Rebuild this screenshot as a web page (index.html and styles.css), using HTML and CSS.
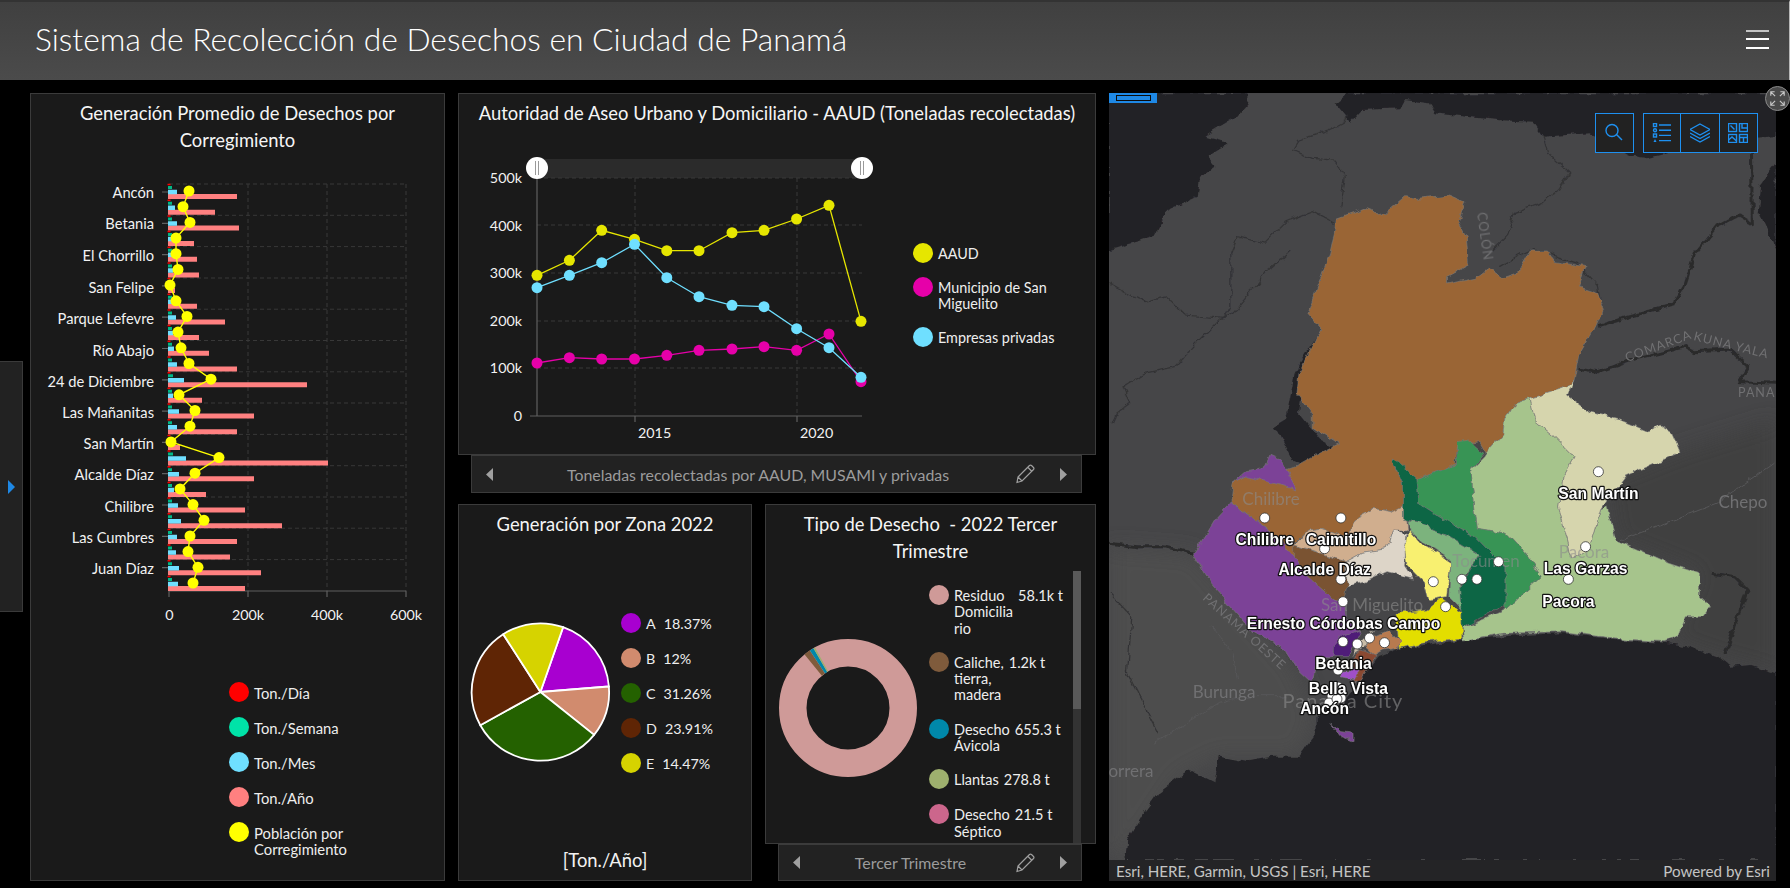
FILE: index.html
```html
<!DOCTYPE html>
<html lang="es">
<head>
<meta charset="utf-8">
<title>Sistema de Recolección de Desechos en Ciudad de Panamá</title>
<link rel="stylesheet" href="styles.css">
</head>
<body>
<header class="topbar">
  <h1 class="app-title">Sistema de Recolección de Desechos en Ciudad de Panamá</h1>
  <div class="burger"><span></span><span></span><span></span></div>
</header>
<div class="side-tab"><span class="side-arrow"></span></div>
<main class="dash">
  <section class="panel col-a">
    <h2 class="title">Generación Promedio de Desechos por Corregimiento</h2>
    <svg class="chart-a" viewBox="31 154 413 486">
      <g class="grid">
        <path d="M169 184H406M169 215.3H406M169 246.6H406M169 278H406M169 309.2H406M169 340.5H406M169 371.8H406M169 403H406M169 434.4H406M169 465.7H406M169 497H406M169 528.2H406M169 559.6H406M248 184V591M327 184V591M406 184V591"/>
      </g>
      <path class="axis" d="M169 591H406M169 591V597M248 591V597M327 591V597M406 591V597M162 192H168M162 223.3H168M162 254.6H168M162 285.9H168M162 317.2H168M162 348.5H168M162 379.8H168M162 411.1H168M162 442.4H168M162 473.7H168M162 505H168M162 536.3H168M162 567.6H168"/>
      <path class="s-year" d="M168 196.5H237M168 212.2H215M168 227.9H239M168 243.5H194M168 259.2H197M168 274.9H199M168 290.6H175M168 306.3H197M168 321.9H225M168 337.6H199M168 353.3H209M168 369H237M168 384.7H307M168 400.3H202M168 416H254M168 431.7H237M168 447.4H180M168 463.1H328M168 478.7H254M168 494.4H206M168 510.1H245M168 525.8H282M168 541.5H237M168 557.1H230M168 572.8H261M168 588.5H245"/>
      <path class="s-month" d="M168 192H177M168 207.7H175M168 223.4H177M168 239H173M168 254.7H173M168 270.4H173M168 286.1H171M168 301.8H173M168 317.4H176M168 333.1H173M168 348.8H174M168 364.5H177M168 380.2H184M168 395.8H173M168 411.5H179M168 427.2H177M168 442.9H171M168 458.6H186M168 474.2H179M168 489.9H174M168 505.6H178M168 521.3H181M168 537H177M168 552.6H176M168 568.3H179M168 584H178"/>
      <path class="s-week" d="M168 187.5h4M168 203.2h4M168 218.9h4M168 234.5h4M168 250.2h4M168 265.9h4M168 281.6h2M168 297.3h4M168 312.9h4M168 328.6h4M168 344.3h4M168 360h4M168 375.7h5M168 391.3h4M168 407h4M168 422.7h4M168 438.4h2M168 454.1h5M168 469.7h4M168 485.4h4M168 501.1h4M168 516.8h4M168 532.5h4M168 548.1h4M168 563.8h4M168 579.5h4"/>
      <path class="s-day" d="M167.500 184.500h3M167.500 200.200h3M167.500 215.900h3M167.500 231.500h3M167.500 247.200h3M167.500 262.900h3M167.500 278.600h3M167.500 294.300h3M167.500 309.900h3M167.500 325.600h3M167.500 341.300h3M167.500 357h3M167.500 372.700h3M167.500 388.300h3M167.500 404h3M167.500 419.700h3M167.500 435.400h3M167.500 451.100h3M167.500 466.700h3M167.500 482.400h3M167.500 498.100h3M167.500 513.800h3M167.500 529.500h3M167.500 545.100h3M167.500 560.800h3M167.500 576.500h3"/>
      <polyline class="s-pop" points="189,191 183,206.700 190,222.400 176,238 176,253.700 178,269.400 170,285.100 176,300.800 187,316.400 178,332.100 181,347.800 189,363.500 211,379.200 179,394.800 195,410.500 190,426.200 171,441.900 219,457.600 195,473.200 180,488.900 193,504.600 204,520.300 190,536 188,551.600 198,567.300 193,583"/>
      <g class="pop-dots">
        <circle cx="189" cy="191" r="5.500"/><circle cx="183" cy="206.700" r="5.500"/><circle cx="190" cy="222.400" r="5.500"/><circle cx="176" cy="238" r="5.500"/><circle cx="176" cy="253.700" r="5.500"/><circle cx="178" cy="269.400" r="5.500"/><circle cx="170" cy="285.100" r="5.500"/><circle cx="176" cy="300.800" r="5.500"/><circle cx="187" cy="316.400" r="5.500"/><circle cx="178" cy="332.100" r="5.500"/><circle cx="181" cy="347.800" r="5.500"/><circle cx="189" cy="363.500" r="5.500"/><circle cx="211" cy="379.200" r="5.500"/><circle cx="179" cy="394.800" r="5.500"/><circle cx="195" cy="410.500" r="5.500"/><circle cx="190" cy="426.200" r="5.500"/><circle cx="171" cy="441.900" r="5.500"/><circle cx="219" cy="457.600" r="5.500"/><circle cx="195" cy="473.200" r="5.500"/><circle cx="180" cy="488.900" r="5.500"/><circle cx="193" cy="504.600" r="5.500"/><circle cx="204" cy="520.300" r="5.500"/><circle cx="190" cy="536" r="5.500"/><circle cx="188" cy="551.600" r="5.500"/><circle cx="198" cy="567.300" r="5.500"/><circle cx="193" cy="583" r="5.500"/>
      </g>
      <g class="lbl-end lbl-cat">
        <text x="154" y="198">Ancón</text><text x="154" y="229">Betania</text><text x="154" y="261">El Chorrillo</text><text x="154" y="293">San Felipe</text><text x="154" y="324">Parque Lefevre</text><text x="154" y="356">Río Abajo</text><text x="154" y="387">24 de Diciembre</text><text x="154" y="418">Las Mañanitas</text><text x="154" y="449">San Martín</text><text x="154" y="480">Alcalde Díaz</text><text x="154" y="512">Chilibre</text><text x="154" y="543">Las Cumbres</text><text x="154" y="574">Juan Díaz</text>
      </g>
      <g class="lbl-mid">
        <text x="169.300" y="620">0</text><text x="248" y="620">200k</text><text x="327" y="620">400k</text><text x="406" y="620">600k</text>
      </g>
    </svg>
    <ul class="legend legend-a">
      <li><i class="dot c-red"></i><span>Ton./Día</span></li>
      <li><i class="dot c-teal"></i><span>Ton./Semana</span></li>
      <li><i class="dot c-sky"></i><span>Ton./Mes</span></li>
      <li><i class="dot c-salmon"></i><span>Ton./Año</span></li>
      <li><i class="dot c-lemon"></i><span>Población por<br>Corregimiento</span></li>
    </ul>
  </section>

  <div class="col-b">
    <div class="stack">
      <section class="panel panel-line">
        <h2 class="title">Autoridad de Aseo Urbano y Domiciliario - AAUD (Toneladas recolectadas)</h2>
        <div class="row">
          <svg class="chart-b" viewBox="459 127 446 327">
            <rect x="537" y="159" width="325" height="19" class="slider-strip"/>
            <path class="grid" d="M537 178H862M537 225H862M537 273H862M537 321H862M537 368H862M635 178V416M797 178V416"/>
            <path class="axis" d="M537 178V416M530 416H862M635 416V422M797 416V422"/>
            <polyline class="ln-y" points="537,275.300 569.400,260.300 601.700,230.300 634.500,239.300 666.800,250.700 699,250.700 732,232.700 764,230.300 796.600,219 829,205.300 861,321.300"/>
            <polyline class="ln-m" points="537,363 569.400,357.700 601.700,359 634.500,359 666.800,355.300 699,350.300 732,349 764,346.700 796.600,350.300 829,334 861,381.700"/>
            <polyline class="ln-b" points="537,287.700 569.400,275.300 601.700,262.700 634.500,244.300 666.800,277.700 699,296.700 732,305.300 764,306.700 796.600,328.700 829,347.700 861,377.300"/>
            <g class="pt-y"><circle cx="537" cy="275.300" r="5.500"/><circle cx="569.400" cy="260.300" r="5.500"/><circle cx="601.700" cy="230.300" r="5.500"/><circle cx="634.500" cy="239.300" r="5.500"/><circle cx="666.800" cy="250.700" r="5.500"/><circle cx="699" cy="250.700" r="5.500"/><circle cx="732" cy="232.700" r="5.500"/><circle cx="764" cy="230.300" r="5.500"/><circle cx="796.600" cy="219" r="5.500"/><circle cx="829" cy="205.300" r="5.500"/><circle cx="861" cy="321.300" r="5.500"/></g>
            <g class="pt-m"><circle cx="537" cy="363" r="5.500"/><circle cx="569.400" cy="357.700" r="5.500"/><circle cx="601.700" cy="359" r="5.500"/><circle cx="634.500" cy="359" r="5.500"/><circle cx="666.800" cy="355.300" r="5.500"/><circle cx="699" cy="350.300" r="5.500"/><circle cx="732" cy="349" r="5.500"/><circle cx="764" cy="346.700" r="5.500"/><circle cx="796.600" cy="350.300" r="5.500"/><circle cx="829" cy="334" r="5.500"/><circle cx="861" cy="381.700" r="5.500"/></g>
            <g class="pt-b"><circle cx="537" cy="287.700" r="5.500"/><circle cx="569.400" cy="275.300" r="5.500"/><circle cx="601.700" cy="262.700" r="5.500"/><circle cx="634.500" cy="244.300" r="5.500"/><circle cx="666.800" cy="277.700" r="5.500"/><circle cx="699" cy="296.700" r="5.500"/><circle cx="732" cy="305.300" r="5.500"/><circle cx="764" cy="306.700" r="5.500"/><circle cx="796.600" cy="328.700" r="5.500"/><circle cx="829" cy="347.700" r="5.500"/><circle cx="861" cy="377.300" r="5.500"/></g>
            <g class="handle"><circle cx="537" cy="168" r="11"/><path d="M535.500 161V175M538.500 161V175"/><circle cx="862" cy="168" r="11"/><path d="M860.500 161V175M863.500 161V175"/></g>
            <g class="lbl-end">
              <text x="522" y="183">500k</text><text x="522" y="231">400k</text><text x="522" y="278">300k</text><text x="522" y="326">200k</text><text x="522" y="373">100k</text><text x="522" y="421">0</text>
            </g>
            <g class="lbl-start"><text x="638" y="438">2015</text><text x="800" y="438">2020</text></g>
          </svg>
          <ul class="legend legend-b">
            <li><i class="dot c-aaud"></i><span>AAUD</span></li>
            <li><i class="dot c-mus"></i><span>Municipio de San<br>Miguelito</span></li>
            <li><i class="dot c-sky"></i><span>Empresas privadas</span></li>
          </ul>
        </div>
      </section>
      <nav class="pager">
        <svg class="tri" viewBox="0 0 7 13"><path d="M7 0V13L0 6.500Z"/></svg>
        <span class="pager-text">Toneladas recolectadas por AAUD, MUSAMI y privadas</span>
        <svg class="pencil" viewBox="0 0 20 20"><path d="M3 13 14.500 1.500a1.500 1.500 0 0 1 2 0l2 2a1.500 1.500 0 0 1 0 2L7 17 2 18.500ZM13 3.500l3.500 3.500M3 13l4 4"/></svg>
        <svg class="tri" viewBox="0 0 7 13"><path d="M0 0V13L7 6.500Z"/></svg>
      </nav>
    </div>

    <div class="lower">
      <section class="panel panel-pie">
        <h2 class="title">Generación por Zona 2022</h2>
        <div class="row">
          <svg class="chart-c" viewBox="459 538 156 240">
            <g class="wedges">
              <path fill="#a800d0" d="M540.400 692 563.100 627.200A68.700 68.700 0 0 1 608.900 686.500Z"/>
              <path fill="#d18b6e" d="M540.400 692 608.900 686.500A68.700 68.700 0 0 1 594.100 734.900Z"/>
              <path fill="#246100" d="M540.400 692 594.100 734.900A68.700 68.700 0 0 1 480.300 725.200Z"/>
              <path fill="#5f2505" d="M540.400 692 480.300 725.200A68.700 68.700 0 0 1 503.200 634.200Z"/>
              <path fill="#d6d300" d="M540.400 692 503.200 634.200A68.700 68.700 0 0 1 563.100 627.200Z"/>
            </g>
          </svg>
          <ul class="legend legend-c">
            <li><i class="dot c-a"></i><span>A</span><span>18.37%</span></li>
            <li><i class="dot c-b"></i><span>B</span><span>12%</span></li>
            <li><i class="dot c-c"></i><span>C</span><span>31.26%</span></li>
            <li><i class="dot c-d"></i><span>D</span><span>23.91%</span></li>
            <li><i class="dot c-e"></i><span>E</span><span>14.47%</span></li>
          </ul>
        </div>
        <p class="footnote">[Ton./Año]</p>
      </section>
      <div class="stack stack-donut">
        <section class="panel panel-donut">
          <h2 class="title">Tipo de Desecho&nbsp; - 2022 Tercer Trimestre</h2>
          <div class="row scroll-row">
            <svg class="chart-d" viewBox="766 565 163 278">
              <circle class="ring" cx="848" cy="708" r="55.250" stroke="#cf9a98"/>
              <circle class="ring" cx="848" cy="708" r="55.250" stroke="#7f5b3c" pathLength="360" stroke-dasharray="5.500 360" transform="rotate(-129 848 708)"/>
              <circle class="ring" cx="848" cy="708" r="55.250" stroke="#0088aa" pathLength="360" stroke-dasharray="3.500 360" transform="rotate(-123.500 848 708)"/>
              <circle class="ring" cx="848" cy="708" r="55.250" stroke="#9eb06e" pathLength="360" stroke-dasharray="1.500 360" transform="rotate(-120 848 708)"/>
            </svg>
            <ul class="legend legend-d">
              <li><i class="dot c-res"></i><span>Residuo<br>Domicilia<br>rio</span><span>58.1k t</span></li>
              <li><i class="dot c-cal"></i><span>Caliche,<br>tierra,<br>madera</span><span>1.2k t</span></li>
              <li><i class="dot c-avi"></i><span>Desecho<br>Ávicola</span><span>655.3 t</span></li>
              <li><i class="dot c-lla"></i><span>Llantas</span><span>278.8 t</span></li>
              <li><i class="dot c-sep"></i><span>Desecho<br>Séptico</span><span>21.5 t</span></li>
            </ul>
            <div class="scrollbar"><div class="thumb"></div></div>
          </div>
        </section>
        <nav class="pager">
          <svg class="tri" viewBox="0 0 7 13"><path d="M7 0V13L0 6.500Z"/></svg>
          <span class="pager-text pager-short">Tercer Trimestre</span>
          <svg class="pencil" viewBox="0 0 20 20"><path d="M3 13 14.500 1.500a1.500 1.500 0 0 1 2 0l2 2a1.500 1.500 0 0 1 0 2L7 17 2 18.500ZM13 3.500l3.500 3.500M3 13l4 4"/></svg>
          <svg class="tri" viewBox="0 0 7 13"><path d="M0 0V13L7 6.500Z"/></svg>
        </nav>
      </div>
    </div>
  </div>

  <section class="map">
    <svg class="map-canvas" viewBox="1108 93 667 788">
      <defs>
        <filter id="rough" filterUnits="userSpaceOnUse" x="1108" y="93" width="667" height="788">
          <feTurbulence type="fractalNoise" baseFrequency=".09" numOctaves="3" seed="4" result="n"/>
          <feDisplacementMap in="SourceGraphic" in2="n" scale="7" xChannelSelector="R" yChannelSelector="G"/>
        </filter>
        <filter id="soft" filterUnits="userSpaceOnUse" x="1108" y="93" width="667" height="788">
          <feGaussianBlur stdDeviation="10"/>
        </filter>
      </defs>
      <rect x="1108" y="93" width="667" height="788" fill="#464648"/>
      <g filter="url(#soft)">
        <g transform="translate(1100 440) scale(.4401 .3333)">
          <path fill="#4d4d4d" d="M18 320 210 340 440 680 490 830 450 950 270 950 180 1010 55 1260H18Z"/>
          <path fill="#3f3f41" d="M1150 120 1320 30 1535 -60V700L1400 650 1290 600 1360 400 1170 300Z"/>
        </g>
      </g>
      <g filter="url(#rough)">
        <g class="water" transform="translate(1100 80) scale(.4401 .3333)">
          <path d="M18 40H335V70L310 110 235 170 290 190 240 230 260 260 225 290 220 350 150 390 120 470 18 510Z"/>
          <path d="M560 40 530 70 565 125 590 90 680 85 690 60 745 70 760 100 900 120 980 125 1005 170 1110 160 1200 225 1240 235 1300 215 1400 190 1535 170V40Z"/>
          <path d="M1535 250 1500 310 1495 400 1535 510Z"/>
          <path d="M440 880 490 770 505 755 495 800 470 830 460 900 450 1000 500 1080 530 1100 500 1180 430 1130 395 1040 420 1020Z"/>
        </g>
        <g class="water" transform="translate(1100 440) scale(.4401 .3333)">
          <path d="M55 1260 60 1200 90 1130 130 1060 180 1010 200 990 260 1030 270 950 330 965 390 950 450 950 490 880 490 830 500 810 540 800 560 770 590 720 630 650 680 625 820 600 950 585 1050 580 1180 600 1290 610 1340 620 1400 650 1430 680 1480 675 1535 700V1260Z"/>
        </g>
        <g class="bounds" transform="translate(1100 80) scale(.4401 .3333)">
          <path d="M435 210 450 180 520 150 555 125 560 105M435 210 480 235 530 240 555 290 545 380"/>
          <path d="M18 610 60 640 100 665 150 650 190 705 280 715 295 680 295 520 310 470 370 490 420 425 480 395 530 430"/>
          <path d="M430 510 380 570 350 620 300 700 270 720 210 800 170 860 100 880 50 920 65 970 35 1000 25 1030"/>
          <path d="M1005 170 1015 220 1065 280 1040 330 1000 370 940 400 920 470 890 510M905 560 960 520 985 505 1080 550 1130 620 1140 690"/>
          <path class="thick" d="M1130 740 1200 710 1300 675 1325 620 1350 520 1400 440 1450 405 1480 430 1478 220"/>
          <path class="thick" d="M1085 865 1130 875 1210 840 1330 800 1350 815 1430 810 1470 860 1450 905 1535 910"/>
        </g>
        <g class="bounds" transform="translate(1100 440) scale(.4401 .3333)">
          <path class="thick" d="M18 310 80 320 140 320 210 340"/>
          <path class="thick" d="M1390 400 1440 410 1470 450 1440 560 1420 640"/>
          <path class="road" d="M1180 300 1400 190 1530 70M120 910 270 790 320 770 420 770M310 720 300 640 250 560"/>
          <path d="M20 460 70 530 60 700 130 880M440 680 410 620 340 570"/>
        </g>
      </g>
      <g class="place">
        <text x="1742" y="508">Chepo</text>
        <text x="1223" y="698">Burunga</text>
        <text x="1130" y="777">orrera</text>
        <text class="caps" transform="translate(1201 599) rotate(42)" text-anchor="start">PANAMÁ OESTE</text>
        <text class="caps" transform="translate(1476 213) rotate(82)" text-anchor="start">COLÓN</text>
        <text class="caps" transform="translate(1626 362) rotate(-20)" text-anchor="start">COMARCA</text>
        <text class="caps" transform="translate(1692 340) rotate(14)" text-anchor="start">KUNA YALA</text>
        <text class="caps" x="1737" y="397" text-anchor="start">PANAMÁ</text>
      </g>
      <g filter="url(#rough)">
        <g class="zones" transform="translate(1100 80) scale(.4401 .3333)">
          <path fill="#9a6534" d="M535 415 600 385 640 405 690 350 720 355 790 345 825 365 810 420 830 470 835 555 785 590 785 612 850 595 880 565 910 595 945 580 975 510 1010 510 1030 545 1100 560 1085 620 1130 640 1142 685 1120 750 1085 830 1075 900 1050 925 975 955 940 970 920 1020 915 1060 880 1110 880 1130 860 1085 810 1100 805 1150 810 1155 715 1200 660 1135 690 1230 690 1290 660 1295 620 1285 580 1315 560 1370 530 1360 500 1345 470 1350 440 1390 455 1460 400 1370 340 1310 295 1265 300 1210 330 1190 395 1180 440 1160 480 1130 540 1090 480 1040 480 1000 445 940 450 880 500 745 470 700 480 660 500 590 520 520 530 460Z"/>
        </g>
        <g class="zones" transform="translate(1100 440) scale(.4401 .3333)">
          <path fill="#7b4397" d="M295 185 340 230 400 290 440 350 470 410 530 480 555 470 555 540 590 570 550 600 530 625 530 650 490 650 480 730 440 680 410 620 340 570 250 430 210 340 240 280 260 235Z"/>
          <path fill="#7b4397" d="M300 130 330 95 370 85 385 45 410 60 445 150 380 125 330 110Z"/>
          <path fill="#7b4397" d="M520 850 545 875 575 880 575 905 545 890Z"/>
          <path fill="#7a5230" d="M440 315 500 340 555 365 560 440 555 470 530 480 470 410 455 380 440 350Z"/>
          <path fill="#d0ae8e" d="M470 270 500 265 530 280 560 290 580 235 620 205 660 215 690 195 695 270 665 270 650 330 590 340 555 365 500 340 440 315Z"/>
          <path fill="#ddd5c8" d="M555 365 590 340 650 330 665 270 695 280 690 375 710 415 650 395 600 425 560 440Z"/>
          <path fill="#a6c48c" d="M975 -125 940 -110 920 -60 915 -20 880 30 870 50 840 90 850 210 855 265 920 280 970 350 1000 410 920 510 820 565 825 600 915 580 1050 575 1170 595 1280 605 1310 590 1330 530 1370 530 1385 500 1360 470 1360 400 1290 370 1240 340 1170 300 1150 200 1135 210 1110 320 1070 360 1060 300 1040 200 1050 110 1075 50 1030 -10 985 -60Z"/>
          <path fill="#d6d5ad" d="M975 -125 1050 -155 1075 -180 1060 -135 1110 -85 1180 -60 1245 -25 1270 -45 1300 -20 1318 35 1260 70 1190 110 1150 180 1135 210 1110 320 1070 360 1060 300 1040 200 1050 110 1075 50 1030 -10 985 -60Z"/>
          <path fill="#399455" d="M810 5 835 0 870 40 840 90 850 210 855 265 920 280 970 350 1000 410 920 510 920 385 850 290 780 240 720 190 715 120 810 75Z"/>
          <path fill="#7cb37d" d="M695 240 720 245 790 290 860 345 815 430 820 510 790 470 795 360 730 305 700 270Z"/>
          <path fill="#0f6645" d="M660 55 680 70 715 110 720 190 780 240 850 290 920 385 920 490 820 565 815 440 860 345 790 290 720 245 685 235 685 130Z"/>
          <path fill="#f8f070" d="M700 270 725 310 770 345 795 365 785 470 745 480 735 430 695 375 690 330Z"/>
          <path fill="#e3de00" d="M670 520 740 510 775 475 820 520 820 595 745 605 680 625 675 590Z"/>
          <path fill="#b87a50" d="M600 620 620 590 655 570 680 600 675 625 640 630 620 645Z"/>
          <path fill="#c9bda8" d="M570 650 590 600 620 575 600 620 575 640Z"/>
          <path fill="#4f1a78" d="M530 620 550 590 590 570 575 610 560 650 530 650Z"/>
          <path fill="#8a4a32" d="M575 650 590 630 625 645 610 680 590 720 575 725Z"/>
          <path fill="#a04fc8" d="M545 690 590 690 575 720 545 710Z"/>
        </g>
      </g>
      <g class="place place-over">
        <text x="1270" y="505">Chilibre</text>
        <text x="1371" y="611">San Miguelito</text>
        <text x="1485" y="567">Tocumen</text>
        <text x="1583" y="558">Pacora</text>
        <text class="big" x="1342" y="708">Panama City</text>
      </g>
      <g class="pts">
        <circle cx="1597.400" cy="471.700" r="5"/><circle cx="1263.700" cy="518" r="5"/><circle cx="1339.900" cy="518" r="5"/><circle cx="1323.600" cy="548.700" r="5"/><circle cx="1339.900" cy="579.300" r="5"/><circle cx="1342" cy="601.700" r="5"/><circle cx="1432.300" cy="581.700" r="5"/><circle cx="1460.900" cy="579.300" r="5"/><circle cx="1475.900" cy="579.300" r="5"/><circle cx="1497.500" cy="561.700" r="5"/><circle cx="1584.600" cy="546.700" r="5"/><circle cx="1567.400" cy="579.300" r="5"/><circle cx="1444.600" cy="606.700" r="5"/><circle cx="1342" cy="641.700" r="5"/><circle cx="1356.200" cy="644" r="5"/><circle cx="1368.500" cy="638" r="5"/><circle cx="1383.500" cy="642.700" r="5"/><circle cx="1337" cy="670" r="5"/><circle cx="1337" cy="687" r="5"/><circle cx="1331" cy="696" r="5"/><circle cx="1340" cy="698" r="5"/><circle cx="1328" cy="703" r="5"/><circle cx="1336" cy="699" r="5"/>
      </g>
      <g class="zone-label">
        <text x="1597.400" y="499">San Martín</text>
        <text x="1263.700" y="545">Chilibre</text>
        <text x="1340" y="545">Caimitillo</text>
        <text x="1323.600" y="575">Alcalde Díaz</text>
        <text x="1584.600" y="574">Las Garzas</text>
        <text x="1567.400" y="607">Pacora</text>
        <text x="1342.500" y="629">Ernesto Córdobas Campo</text>
        <text x="1342.500" y="669">Betania</text>
        <text x="1347.400" y="694">Bella Vista</text>
        <text x="1323.600" y="714">Ancón</text>
      </g>
    </svg>
    <div class="map-tag"><span></span></div>
    <div class="toolbar">
      <div class="tool"><svg class="ico" viewBox="0 0 20 20"><circle cx="8" cy="7.500" r="6"/><path d="M12.500 11.500 18 17"/></svg></div>
      <div class="tool-group">
        <div class="tool"><svg class="ico" viewBox="0 0 18 20"><path d="M6 2H18M6 7.200H18M6 12.400H18M6 17.600H18"/><rect x=".5" y=".5" width="3" height="3"/><circle cx="2" cy="7.200" r="1.500"/><rect x=".5" y="11" width="3" height="3"/><path class="solid" d="M2 16 3.500 19H.5Z"/></svg></div>
        <div class="tool"><svg class="ico" viewBox="0 0 20 20"><path d="M10 1 20 6.500 10 12 0 6.500ZM0 10 10 15.500 20 10M0 13.500 10 19 20 13.500"/></svg></div>
        <div class="tool"><svg class="ico" viewBox="0 0 20 20"><rect x=".5" y=".5" width="8" height="8"/><rect x="11.500" y=".5" width="8" height="8"/><rect x=".5" y="11.500" width="8" height="8"/><rect x="11.500" y="11.500" width="8" height="8"/><path d="M2.500 2.500 6.500 6.500M14 .5V5H19.500M.5 17 4 14 8.500 18M11.500 14.500H19.500M15.500 14.500V19.500"/></svg></div>
      </div>
    </div>
    <div class="expand"><svg viewBox="0 0 24 24"><path d="M5 9V5H9M5 5 9.500 9.500M15 5H19V9M19 5 14.500 9.500M5 15V19H9M5 19 9.500 14.500M15 19H19V15M19 19 14.500 14.500"/></svg></div>
    <div class="attribution"><span>Esri, HERE, Garmin, USGS | Esri, HERE</span><span>Powered by Esri</span></div>
  </section>
</main>
</body>
</html>
```
FILE: styles.css
```css
* { box-sizing: border-box; }
html, body { margin: 0; padding: 0; }
body {
  width: 1790px;
  height: 888px;
  overflow: hidden;
  background: #000;
  color: #f2f2f2;
  font-family: Lato, "Open Sans", sans-serif;
  position: relative;
}
ul { list-style: none; margin: 0; padding: 0; }
h1, h2, p { margin: 0; font-weight: 400; }
svg { display: block; flex: none; }

.topbar {
  height: 80px;
  border-top: 2px solid #333;
  border-right: 1px solid #b8b8b8;
  background: linear-gradient(#404040, #4b4b4b);
  display: flex;
  align-items: center;
  justify-content: space-between;
  padding: 0 20px 4px 35px;
}
.app-title { font-size: 31.800px; font-weight: 300; color: #fff; }
.burger { width: 23px; display: flex; flex-direction: column; gap: 6.500px; }
.burger span { height: 2px; background: #fff; }
.burger span:first-child { background: #c4c4c4; }

.side-tab {
  position: absolute;
  left: 0;
  top: 361px;
  width: 23px;
  height: 251px;
  background: #222;
  border: 1px solid #3a3a3a;
  border-left: 0;
  display: flex;
  align-items: center;
  justify-content: center;
}
.side-arrow {
  border-left: 7px solid #1e88e5;
  border-top: 7px solid transparent;
  border-bottom: 7px solid transparent;
}

.dash {
  display: flex;
  gap: 13px;
  padding: 13px 15px 7px 30px;
  height: 808px;
}
.panel {
  background: #1a1a1a;
  border: 1px solid #3b3b3b;
  display: flex;
  flex-direction: column;
}
.title {
  font-size: 18.400px;
  line-height: 27px;
  padding: 6px 8px 0;
  text-align: center;
  color: #f5f5f5;
}
.row { display: flex; align-items: flex-start; }

.col-a { width: 415px; }
.chart-a { width: 413px; height: 486px; }
.col-b { width: 638px; display: flex; flex-direction: column; gap: 11px; }
.stack { display: flex; flex-direction: column; }
.panel-line { height: 362px; }
.chart-b { width: 446px; height: 327px; }
.lower { display: flex; gap: 13px; flex: 1; }
.panel-pie { width: 294px; }
.chart-c { width: 156px; height: 240px; }
.stack-donut { width: 331px; }
.panel-donut { height: 340px; }
.scroll-row { height: 278px; overflow: hidden; }
.chart-d { width: 163px; height: 278px; }

.pager {
  height: 38px;
  margin: 0 14px 0 13px;
  background: #222;
  border: 1px solid #3b3b3b;
  display: flex;
  align-items: center;
  padding: 0 14px;
}
.stack-donut .pager { height: 37px; }
.pager-text {
  flex: 1;
  text-align: center;
  font-size: 15.900px;
  color: #9c9c9c;
  padding-left: 26px;
}
.pager-short { padding-left: 24px; }
.tri { width: 7px; height: 13px; fill: #a0a0a0; }
.pencil {
  width: 20px;
  height: 20px;
  margin: 0 25px 0 18px;
  fill: none;
  stroke: #a0a0a0;
  stroke-width: 1.200;
}

.legend { display: flex; flex-direction: column; gap: 15px; font-size: 14.800px; line-height: 16.300px; color: #eee; }
.legend li { display: flex; align-items: flex-start; gap: 5px; }
.legend span { padding-top: 3px; }
.dot { width: 20px; height: 20px; border-radius: 50%; flex: none; }
.legend-a { margin: 42px 0 0 198px; }
.legend-b { margin: 116px 0 0 8px; gap: 14px; font-size: 14.400px; }
.legend-c { margin: 75px 0 0 6px; font-size: 14.300px; }
.legend-c li span + span { margin-left: 3px; }
.legend-d { margin: 20px 0 0; font-size: 14.500px; width: 144px; flex: none; }

.c-red { background: #f00; }
.c-teal { background: #00e3a8; }
.c-sky { background: #6fdfff; }
.c-salmon { background: #ff8080; }
.c-lemon { background: #ff0; }
.c-aaud { background: #e6e600; }
.c-mus { background: #e600a9; }
.c-a { background: #a800d0; }
.c-b { background: #d18b6e; }
.c-c { background: #246100; }
.c-d { background: #5f2505; }
.c-e { background: #d6d300; }
.c-res { background: #cf9a98; }
.c-cal { background: #7f5b3c; }
.c-avi { background: #0088aa; }
.c-lla { background: #9eb06e; }
.c-sep { background: #cc668c; }

.footnote {
  margin-top: auto;
  padding-bottom: 7px;
  line-height: 26px;
  font-size: 18.400px;
  text-align: center;
}

.scrollbar {
  width: 8px;
  height: 272px;
  margin-top: 6px;
  background: #333;
  flex: none;
}
.thumb { height: 138px; background: #595959; }

.grid { fill: none; stroke: #383838; stroke-dasharray: 4 3; }
.grid path { fill: none; }
.axis { fill: none; stroke: #5f5f5f; stroke-width: 1.200; }
.s-year, .s-month, .s-week, .s-day { fill: none; stroke-width: 4.500; }
.s-year { stroke: #ff8080; stroke-width: 5; }
.s-month { stroke: #6fdfff; }
.s-week { stroke: #00b888; stroke-width: 3; }
.s-day { stroke: #f00; stroke-width: 1.500; }
.s-pop { fill: none; stroke: #ff0; stroke-width: 1.400; }
.pop-dots { fill: #ff0; }
.lbl-end, .lbl-mid, .lbl-start { fill: #f2f2f2; font-size: 14.300px; }
.lbl-end { text-anchor: end; }
.lbl-mid { text-anchor: middle; }
.lbl-cat { font-size: 14.700px; }

.slider-strip { fill: #2b2b2b; }
.ln-y, .ln-m, .ln-b { fill: none; stroke-width: 1.300; }
.ln-y { stroke: #e6e600; }
.ln-m { stroke: #e600a9; }
.ln-b { stroke: #6fdfff; }
.pt-y { fill: #e6e600; }
.pt-m { fill: #e600a9; }
.pt-b { fill: #6fdfff; }
.handle circle { fill: #fff; }
.handle path { fill: none; stroke: #9a9a9a; stroke-width: 1; }
.wedges path { stroke: #fff; stroke-width: 1.800; stroke-linejoin: round; }
.ring { fill: none; stroke-width: 27.500; }

.map { width: 667px; height: 788px; position: relative; background: #464648; }
.map-canvas { width: 667px; height: 788px; overflow: hidden; }
.water path { fill: #232227; }
.bounds path { fill: none; stroke: #333335; stroke-width: 1.200; vector-effect: non-scaling-stroke; }
.bounds .thick { stroke: #2a2a2c; stroke-width: 3; }
.bounds .road { stroke: #565658; stroke-width: 1; }
.zones path { stroke: #7a7a7a; stroke-width: .6; vector-effect: non-scaling-stroke; }
.pts circle { fill: #fff; stroke: #333; stroke-width: .8; }
.place { fill: #707072; font-size: 17px; text-anchor: middle; }
.place-over { fill: rgba(140, 140, 140, .6); }
.place .big { font-size: 20px; letter-spacing: 1px; }
.place .caps { font-size: 12.500px; letter-spacing: 1px; }
.zone-label {
  font-family: "Liberation Sans", Arial, sans-serif;
  font-weight: 700;
  font-size: 15.700px;
  text-anchor: middle;
  fill: #fff;
  stroke: #111;
  stroke-width: 2.500px;
  paint-order: stroke;
  stroke-linejoin: round;
}

.map-tag {
  position: absolute;
  left: 0;
  top: 0;
  width: 48px;
  height: 10px;
  background: #1e88e5;
  padding: 2px 6px 2px 7px;
}
.map-tag span { display: block; height: 6px; background: #1e88e5; border: 1px solid #0c0c0c; }
.toolbar { position: absolute; top: 20px; right: 18px; display: flex; gap: 9px; }
.tool-group { display: flex; }
.tool {
  width: 39px;
  height: 40px;
  background: #222;
  border: 1px solid #1e90f0;
  display: flex;
  align-items: center;
  justify-content: center;
}
.tool-group .tool { width: 38.400px; }
.tool-group .tool + .tool { border-left: 0; }
.ico { width: 20px; height: 20px; fill: none; stroke: #1e90f0; stroke-width: 1.400; }
.ico .solid { fill: #1e90f0; stroke: none; }
.expand {
  position: absolute;
  right: -14px;
  top: -7px;
  width: 25px;
  height: 25px;
  border-radius: 50%;
  background: #4a4a4a;
  border: 1px solid #8a8a8a;
}
.expand svg { width: 23px; height: 23px; fill: none; stroke: #c8c8c8; stroke-width: 1.200; }
.attribution {
  position: absolute;
  left: 0;
  right: 0;
  bottom: 0;
  height: 21px;
  background: #242426;
  display: flex;
  justify-content: space-between;
  align-items: center;
  padding: 0 6px 0 7px;
  font-size: 15.200px;
  color: #c4c4c4;
}
```
